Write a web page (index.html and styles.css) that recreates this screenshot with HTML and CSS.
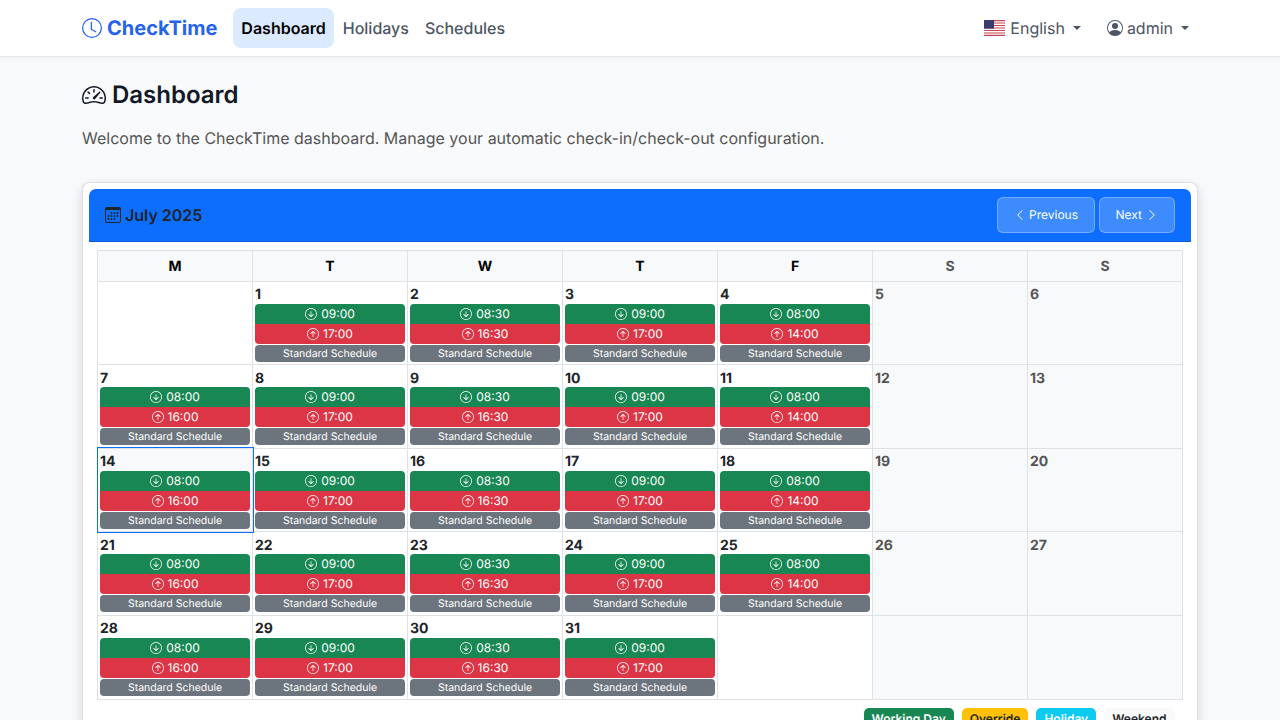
FILE: index.html
```html
<!DOCTYPE html>
<html lang="en">
<head>
  <meta charset="UTF-8">
  <title>CheckTime - Dashboard</title>
  <meta name="viewport" content="width=device-width, initial-scale=1.0">
  <link rel="stylesheet" href="styles.css">
</head>
<body>
  <svg class="sprites" xmlns="http://www.w3.org/2000/svg">
    <symbol id="i-clock" viewBox="0 0 16 16"><path d="M8 3.5a.5.5 0 0 0-1 0V9a.5.5 0 0 0 .252.434l3.5 2a.5.5 0 0 0 .496-.868L8 8.71V3.5z"/><path d="M8 16A8 8 0 1 0 8 0a8 8 0 0 0 0 16zm7-8A7 7 0 1 1 1 8a7 7 0 0 1 14 0z"/></symbol>
    <symbol id="i-speed" viewBox="0 0 16 16"><path d="M8 4a.5.5 0 0 1 .5.5V6a.5.5 0 0 1-1 0V4.5A.5.5 0 0 1 8 4zM3.732 5.732a.5.5 0 0 1 .707 0l.915.914a.5.5 0 1 1-.708.708l-.914-.915a.5.5 0 0 1 0-.707zM2 10a.5.5 0 0 1 .5-.5h1.586a.5.5 0 0 1 0 1H2.5A.5.5 0 0 1 2 10zm9.5 0a.5.5 0 0 1 .5-.5h1.5a.5.5 0 0 1 0 1H12a.5.5 0 0 1-.5-.5zm.754-4.246a.389.389 0 0 0-.527-.02L7.547 9.31a.91.91 0 1 0 1.302 1.258l3.434-4.297a.389.389 0 0 0-.029-.518z"/><path fill-rule="evenodd" d="M0 10a8 8 0 1 1 15.547 2.661c-.442 1.253-1.845 1.602-2.932 1.25C11.309 13.488 9.475 13 8 13c-1.474 0-3.31.488-4.615.911-1.087.352-2.49.003-2.932-1.25A7.988 7.988 0 0 1 0 10zm8-7a7 7 0 0 0-6.603 9.329c.203.575.923.876 1.68.63C4.397 12.533 6.358 12 8 12s3.604.532 4.923.96c.757.245 1.477-.056 1.68-.631A7 7 0 0 0 8 3z"/></symbol>
    <symbol id="i-cal" viewBox="0 0 16 16"><path d="M14 0H2a2 2 0 0 0-2 2v12a2 2 0 0 0 2 2h12a2 2 0 0 0 2-2V2a2 2 0 0 0-2-2zM1 3.857C1 3.384 1.448 3 2 3h12c.552 0 1 .384 1 .857v10.286c0 .473-.448.857-1 .857H2c-.552 0-1-.384-1-.857V3.857z"/><path d="M6.5 7a1 1 0 1 0 0-2 1 1 0 0 0 0 2zm3 0a1 1 0 1 0 0-2 1 1 0 0 0 0 2zm3 0a1 1 0 1 0 0-2 1 1 0 0 0 0 2zm-9 3a1 1 0 1 0 0-2 1 1 0 0 0 0 2zm3 0a1 1 0 1 0 0-2 1 1 0 0 0 0 2zm3 0a1 1 0 1 0 0-2 1 1 0 0 0 0 2zm3 0a1 1 0 1 0 0-2 1 1 0 0 0 0 2zm-9 3a1 1 0 1 0 0-2 1 1 0 0 0 0 2zm3 0a1 1 0 1 0 0-2 1 1 0 0 0 0 2zm3 0a1 1 0 1 0 0-2 1 1 0 0 0 0 2z"/></symbol>
    <symbol id="i-in" viewBox="0 0 16 16"><path fill-rule="evenodd" d="M1 8a7 7 0 1 0 14 0A7 7 0 0 0 1 8zm15 0A8 8 0 1 1 0 8a8 8 0 0 1 16 0zM8.5 4.5a.5.5 0 0 0-1 0v5.793L5.354 8.146a.5.5 0 1 0-.708.708l3 3a.5.5 0 0 0 .708 0l3-3a.5.5 0 0 0-.708-.708L8.5 10.293V4.5z"/></symbol>
    <symbol id="i-out" viewBox="0 0 16 16"><path fill-rule="evenodd" d="M1 8a7 7 0 1 0 14 0A7 7 0 0 0 1 8zm15 0A8 8 0 1 1 0 8a8 8 0 0 1 16 0zm-7.5 3.5a.5.5 0 0 1-1 0V5.707L5.354 7.854a.5.5 0 1 1-.708-.708l3-3a.5.5 0 0 1 .708 0l3 3a.5.5 0 0 1-.708.708L8.5 5.707V11.5z"/></symbol>
    <symbol id="i-left" viewBox="0 0 16 16"><path fill-rule="evenodd" d="M11.354 1.646a.5.5 0 0 1 0 .708L5.707 8l5.647 5.646a.5.5 0 0 1-.708.708l-6-6a.5.5 0 0 1 0-.708l6-6a.5.5 0 0 1 .708 0z"/></symbol>
    <symbol id="i-right" viewBox="0 0 16 16"><path fill-rule="evenodd" d="M4.646 1.646a.5.5 0 0 1 .708 0l6 6a.5.5 0 0 1 0 .708l-6 6a.5.5 0 0 1-.708-.708L10.293 8 4.646 2.354a.5.5 0 0 1 0-.708z"/></symbol>
    <symbol id="i-user" viewBox="0 0 16 16"><path d="M11 6a3 3 0 1 1-6 0 3 3 0 0 1 6 0z"/><path fill-rule="evenodd" d="M0 8a8 8 0 1 1 16 0A8 8 0 0 1 0 8zm8-7a7 7 0 0 0-5.468 11.37C3.242 11.226 4.805 10 8 10s4.757 1.225 5.468 2.37A7 7 0 0 0 8 1z"/></symbol>
  </svg>

  <nav class="navbar">
    <div class="container nav-inner">
      <a class="brand" href="#"><svg class="icon"><use href="#i-clock"/></svg>CheckTime</a>
      <ul class="nav-links">
        <li><a class="nav-link active" href="#">Dashboard</a></li>
        <li><a class="nav-link" href="#">Holidays</a></li>
        <li><a class="nav-link" href="#">Schedules</a></li>
      </ul>
      <ul class="nav-right">
        <li>
          <a class="nav-link dropdown" href="#">
            <svg class="flag" viewBox="0 0 21 16">
              <rect width="21" height="16" fill="#fff"/>
              <path d="M0 .6h21M0 3h21M0 5.5h21M0 8h21M0 10.5h21M0 13h21M0 15.4h21" stroke="#c8464f" stroke-width="1.2"/>
              <rect width="10" height="8.6" fill="#3c3b6e"/>
            </svg>
            English
          </a>
        </li>
        <li>
          <a class="nav-link dropdown" href="#"><svg class="icon-user"><use href="#i-user"/></svg>admin</a>
        </li>
      </ul>
    </div>
  </nav>

  <main class="container">
    <h1 class="page-title"><svg class="icon"><use href="#i-speed"/></svg>Dashboard</h1>
    <p class="intro">Welcome to the CheckTime dashboard. Manage your automatic check-in/check-out configuration.</p>

    <div class="card">
      <div class="card-header">
        <h2 class="month"><svg class="icon"><use href="#i-cal"/></svg>July 2025</h2>
        <div class="month-nav">
          <a class="btn" href="#"><svg class="icon"><use href="#i-left"/></svg>Previous</a>
          <a class="btn" href="#">Next<svg class="icon"><use href="#i-right"/></svg></a>
        </div>
      </div>

      <table class="calendar">
        <thead>
          <tr><th>M</th><th>T</th><th>W</th><th>T</th><th>F</th><th class="weekend">S</th><th class="weekend">S</th></tr>
        </thead>
        <tbody>
          <tr>
            <td></td>
            <td><span class="day">1</span><div class="evt in"><svg class="icon"><use href="#i-in"/></svg>09:00</div><div class="evt out"><svg class="icon"><use href="#i-out"/></svg>17:00</div><div class="sched">Standard Schedule</div></td>
            <td><span class="day">2</span><div class="evt in"><svg class="icon"><use href="#i-in"/></svg>08:30</div><div class="evt out"><svg class="icon"><use href="#i-out"/></svg>16:30</div><div class="sched">Standard Schedule</div></td>
            <td><span class="day">3</span><div class="evt in"><svg class="icon"><use href="#i-in"/></svg>09:00</div><div class="evt out"><svg class="icon"><use href="#i-out"/></svg>17:00</div><div class="sched">Standard Schedule</div></td>
            <td><span class="day">4</span><div class="evt in"><svg class="icon"><use href="#i-in"/></svg>08:00</div><div class="evt out"><svg class="icon"><use href="#i-out"/></svg>14:00</div><div class="sched">Standard Schedule</div></td>
            <td class="weekend"><span class="day">5</span></td>
            <td class="weekend"><span class="day">6</span></td>
          </tr>
          <tr>
            <td><span class="day">7</span><div class="evt in"><svg class="icon"><use href="#i-in"/></svg>08:00</div><div class="evt out"><svg class="icon"><use href="#i-out"/></svg>16:00</div><div class="sched">Standard Schedule</div></td>
            <td><span class="day">8</span><div class="evt in"><svg class="icon"><use href="#i-in"/></svg>09:00</div><div class="evt out"><svg class="icon"><use href="#i-out"/></svg>17:00</div><div class="sched">Standard Schedule</div></td>
            <td><span class="day">9</span><div class="evt in"><svg class="icon"><use href="#i-in"/></svg>08:30</div><div class="evt out"><svg class="icon"><use href="#i-out"/></svg>16:30</div><div class="sched">Standard Schedule</div></td>
            <td><span class="day">10</span><div class="evt in"><svg class="icon"><use href="#i-in"/></svg>09:00</div><div class="evt out"><svg class="icon"><use href="#i-out"/></svg>17:00</div><div class="sched">Standard Schedule</div></td>
            <td><span class="day">11</span><div class="evt in"><svg class="icon"><use href="#i-in"/></svg>08:00</div><div class="evt out"><svg class="icon"><use href="#i-out"/></svg>14:00</div><div class="sched">Standard Schedule</div></td>
            <td class="weekend"><span class="day">12</span></td>
            <td class="weekend"><span class="day">13</span></td>
          </tr>
          <tr>
            <td class="today"><span class="day">14</span><div class="evt in"><svg class="icon"><use href="#i-in"/></svg>08:00</div><div class="evt out"><svg class="icon"><use href="#i-out"/></svg>16:00</div><div class="sched">Standard Schedule</div></td>
            <td><span class="day">15</span><div class="evt in"><svg class="icon"><use href="#i-in"/></svg>09:00</div><div class="evt out"><svg class="icon"><use href="#i-out"/></svg>17:00</div><div class="sched">Standard Schedule</div></td>
            <td><span class="day">16</span><div class="evt in"><svg class="icon"><use href="#i-in"/></svg>08:30</div><div class="evt out"><svg class="icon"><use href="#i-out"/></svg>16:30</div><div class="sched">Standard Schedule</div></td>
            <td><span class="day">17</span><div class="evt in"><svg class="icon"><use href="#i-in"/></svg>09:00</div><div class="evt out"><svg class="icon"><use href="#i-out"/></svg>17:00</div><div class="sched">Standard Schedule</div></td>
            <td><span class="day">18</span><div class="evt in"><svg class="icon"><use href="#i-in"/></svg>08:00</div><div class="evt out"><svg class="icon"><use href="#i-out"/></svg>14:00</div><div class="sched">Standard Schedule</div></td>
            <td class="weekend"><span class="day">19</span></td>
            <td class="weekend"><span class="day">20</span></td>
          </tr>
          <tr>
            <td><span class="day">21</span><div class="evt in"><svg class="icon"><use href="#i-in"/></svg>08:00</div><div class="evt out"><svg class="icon"><use href="#i-out"/></svg>16:00</div><div class="sched">Standard Schedule</div></td>
            <td><span class="day">22</span><div class="evt in"><svg class="icon"><use href="#i-in"/></svg>09:00</div><div class="evt out"><svg class="icon"><use href="#i-out"/></svg>17:00</div><div class="sched">Standard Schedule</div></td>
            <td><span class="day">23</span><div class="evt in"><svg class="icon"><use href="#i-in"/></svg>08:30</div><div class="evt out"><svg class="icon"><use href="#i-out"/></svg>16:30</div><div class="sched">Standard Schedule</div></td>
            <td><span class="day">24</span><div class="evt in"><svg class="icon"><use href="#i-in"/></svg>09:00</div><div class="evt out"><svg class="icon"><use href="#i-out"/></svg>17:00</div><div class="sched">Standard Schedule</div></td>
            <td><span class="day">25</span><div class="evt in"><svg class="icon"><use href="#i-in"/></svg>08:00</div><div class="evt out"><svg class="icon"><use href="#i-out"/></svg>14:00</div><div class="sched">Standard Schedule</div></td>
            <td class="weekend"><span class="day">26</span></td>
            <td class="weekend"><span class="day">27</span></td>
          </tr>
          <tr>
            <td><span class="day">28</span><div class="evt in"><svg class="icon"><use href="#i-in"/></svg>08:00</div><div class="evt out"><svg class="icon"><use href="#i-out"/></svg>16:00</div><div class="sched">Standard Schedule</div></td>
            <td><span class="day">29</span><div class="evt in"><svg class="icon"><use href="#i-in"/></svg>09:00</div><div class="evt out"><svg class="icon"><use href="#i-out"/></svg>17:00</div><div class="sched">Standard Schedule</div></td>
            <td><span class="day">30</span><div class="evt in"><svg class="icon"><use href="#i-in"/></svg>08:30</div><div class="evt out"><svg class="icon"><use href="#i-out"/></svg>16:30</div><div class="sched">Standard Schedule</div></td>
            <td><span class="day">31</span><div class="evt in"><svg class="icon"><use href="#i-in"/></svg>09:00</div><div class="evt out"><svg class="icon"><use href="#i-out"/></svg>17:00</div><div class="sched">Standard Schedule</div></td>
            <td></td>
            <td class="weekend"></td>
            <td class="weekend"></td>
          </tr>
        </tbody>
      </table>

      <div class="legend">
        <span class="badge working">Working Day</span>
        <span class="badge override">Override</span>
        <span class="badge holiday">Holiday</span>
        <span class="badge off">Weekend</span>
      </div>
    </div>
  </main>
</body>
</html>
```

FILE: styles.css
```css
* {
  box-sizing: border-box;
}
body {
  margin: 0;
  font-family: Inter, "Liberation Sans", sans-serif;
  font-size: 16px;
  line-height: 1.5;
  color: #212529;
  background: #f9fafb;
  text-rendering: geometricPrecision;
}
a {
  text-decoration: none;
  color: inherit;
}
ul {
  list-style: none;
  margin: 0;
  padding: 0;
}
.sprites {
  display: none;
}
.icon {
  width: 1em;
  height: 1em;
  fill: currentColor;
  flex: none;
}
.container {
  width: 1140px;
  margin: 0 auto;
  padding: 0 12px;
}

/* navbar */
.navbar {
  height: 57px;
  background: #fff;
  border-bottom: 1px solid #e5e7eb;
  box-shadow: 0 2px 4px rgba(0,0,0,0.04);
}
.nav-inner {
  display: flex;
  align-items: center;
  height: 56px;
}
.brand {
  display: flex;
  align-items: center;
  gap: 5px;
  margin-right: 16px;
  font-size: 20px;
  font-weight: 700;
  color: #2563eb;
}
.nav-links, .nav-right {
  display: flex;
}
.nav-links .nav-link {
  font-weight: 500;
}
.nav-right {
  margin-left: auto;
  margin-right: 1px;
  gap: 10px;
}
.nav-link {
  display: flex;
  align-items: center;
  padding: 8px;
  border-radius: 8px;
  color: #4b5563;
}
.nav-links .nav-link.active {
  margin-right: 1px;
  background: #dbeafe;
  color: #000;
  font-weight: 600;
}
.flag {
  width: 21px;
  height: 16px;
  margin-right: 5px;
}
.icon-user {
  width: 16px;
  height: 16px;
  margin-right: 4px;
  fill: currentColor;
}
.dropdown::after {
  content: "";
  margin-left: 8px;
  border-top: 4.8px solid currentColor;
  border-left: 4.8px solid transparent;
  border-right: 4.8px solid transparent;
}

/* heading */
.page-title {
  display: flex;
  align-items: center;
  gap: 6px;
  margin: 20px 0 0;
  font-size: 24px;
  font-weight: 600;
  line-height: 36px;
  color: #111827;
}
.intro {
  margin: 13px 0 32px;
  color: #555;
}

/* calendar card */
.card {
  padding: 6px;
  background: #fff;
  border: 1px solid rgba(0,0,0,0.125);
  border-radius: 8px;
  box-shadow: 0 4px 12px rgba(0,0,0,0.15);
}
.card-header {
  display: flex;
  align-items: center;
  justify-content: space-between;
  height: 53px;
  padding: 0 16px;
  background: #0d6efd;
  border-bottom: 1px solid #0b5ed7;
  border-radius: 7px 7px 0 0;
}
.month {
  display: flex;
  align-items: center;
  gap: 4px;
  margin: 0;
  font-size: 16px;
  font-weight: 600;
  color: #212529;
}
.month-nav {
  display: flex;
  gap: 4px;
}
.btn {
  display: flex;
  align-items: center;
  justify-content: center;
  gap: 3px;
  height: 36px;
  padding: 0 15.5px;
  font-size: 12px;
  color: #fff;
  background: rgba(255,255,255,0.2);
  border: 1px solid rgba(255,255,255,0.3);
  border-radius: 6px;
}
.btn:last-child {
  padding: 0 16px;
  gap: 4px;
}
.btn .icon {
  width: 12px;
  height: 12px;
}
.calendar {
  width: 1086px;
  margin: 7.6px 8px 0;
  table-layout: fixed;
  border-collapse: collapse;
}
.calendar th, .calendar td {
  border: 1px solid #dee2e6;
}
.calendar th {
  height: 31px;
  padding: 1px 0 0;
  font-size: 14px;
  font-weight: 700;
  text-align: center;
  background: #f8f9fa;
  color: #000;
}
.calendar th.weekend {
  color: #555;
}
.calendar td {
  padding: 2px 2px 2.5px;
  vertical-align: top;
}
.calendar td.weekend {
  background: #f8f9fa;
}
.calendar td.weekend .day {
  color: #555;
}
.calendar td.today {
  background: #f8f9fa;
  outline: 1px solid #0d6efd;
  outline-offset: -0.5px;
}
.day {
  display: block;
  padding-top: 3.5px;
  font-size: 14px;
  font-weight: 700;
  line-height: 16.6px;
  color: #212529;
}
.evt {
  display: flex;
  align-items: center;
  justify-content: center;
  gap: 4px;
  height: 20px;
  font-size: 12px;
  color: #fff;
}
.evt .icon {
  width: 12px;
  height: 12px;
}
.evt.in {
  background: #198754;
  border-radius: 4px 4px 0 0;
}
.evt.out {
  background: #dc3545;
  border-radius: 0 0 4px 4px;
}
.sched {
  height: 17px;
  margin-top: 1px;
  font-size: 10.5px;
  line-height: 17px;
  text-align: center;
  color: #fff;
  background: #6c757d;
  border-radius: 4px;
}

/* legend */
.legend {
  display: flex;
  justify-content: flex-end;
  gap: 8px;
  margin: 8.5px 16.5px 4px;
}
.badge {
  padding: 3px 8px;
  font-size: 12px;
  font-weight: 600;
  line-height: 16px;
  border-radius: 5px;
}
.working {
  background: #198754;
  color: #fff;
}
.override {
  background: #ffc107;
  color: #212529;
}
.holiday {
  background: #0dcaf0;
  color: #fff;
}
.off {
  background: #f8f9fa;
  color: #212529;
}
```
